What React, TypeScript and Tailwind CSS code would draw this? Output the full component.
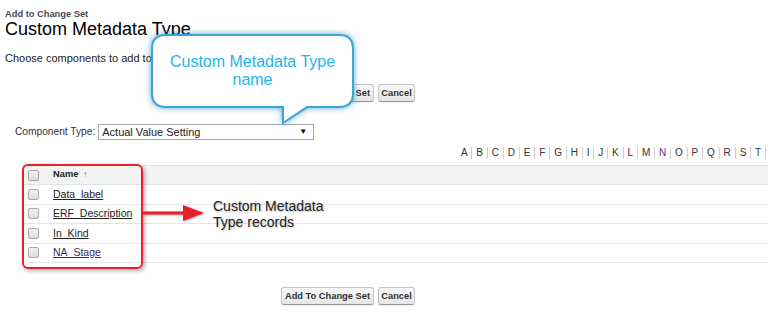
const letters = 'ABCDEFGHIJKLMNOPQRST'.split('')

const records = ['Data_label', 'ERF_Description', 'In_Kind', 'NA_Stage']

function Btn({ label, w }: { label: string; w: string }) {
    return (
        <button
            className={`${w} h-[18px] rounded-[3px] border border-[#c4c4c4] border-b-[#9a9a9a] bg-gradient-to-b from-[#f8f8f8] to-[#e6e6e6] text-[9.3px] font-bold leading-[16px] text-[#333] shadow-[0_1px_1px_rgba(0,0,0,0.08)]`}
        >
            {label}
        </button>
    )
}

function Check() {
    return <span className="block h-[11px] w-[11px] rounded-[2px] border border-[#a8a8a8] bg-gradient-to-b from-[#f2f2f2] to-[#dcdcdc]" />
}

export default function App() {
    return (
        <div className="relative h-[320px] w-[768px] overflow-hidden bg-white font-['Liberation_Sans',Arial,sans-serif] text-[#222]">
            {/* Page header */}
            <div className="px-[5px] pt-[8px]">
                <div className="text-[9.3px] font-bold leading-[12px] text-[#4a4a56]">Add to Change Set</div>
                <h1 className="text-[18px] leading-[19px] text-black">Custom Metadata Type</h1>
                <p className="mt-[12px] text-[11px] leading-[14px] text-[#222]">Choose components to add to this change set.</p>
            </div>

            {/* Top buttons */}
            <div className="mt-[19px] flex gap-[4px] pl-[281px]">
                <Btn label="Add To Change Set" w="w-[93px]" />
                <Btn label="Cancel" w="w-[37px]" />
            </div>

            {/* Component type */}
            <div className="mt-[22px] flex items-center pl-[15px]">
                <span className="text-[10.2px] leading-[16px] text-[#333]">Component Type:</span>
                <div className="ml-[3px] flex h-[16px] w-[216px] items-center justify-between border border-[#a9a9a9] bg-white pl-[3px] pr-[6px]">
                    <span className="text-[11px] leading-[14px] text-[#222]">Actual Value Setting</span>
                    <span className="text-[8px] leading-[10px] text-black">▼</span>
                </div>
            </div>

            {/* Alphabet filter */}
            <div className="mt-[7px] flex whitespace-nowrap pl-[457px] text-[10px] leading-[12px] text-[#333]">
                {letters.map((l, i) => (
                    <span
                        key={l}
                        className={`px-[3.9px] border-r border-[#cfcfcf] ${i > 0 ? '' : ''} ${l === 'N' ? 'text-[#5b2a86]' : ''}`}
                    >
                        {l}
                    </span>
                ))}
            </div>

            {/* Table */}
            <div className="ml-[22px] mt-[6px]">
                <div className="flex h-[20px] items-center border-y border-[#e0e3e5] bg-[#f2f3f3]">
                    <div className="w-[31px] pl-[6px]"><Check /></div>
                    <span className="text-[9.3px] font-bold text-[#222]">Name</span>
                    <span className="ml-[5px] text-[8px] text-[#666]">↑</span>
                </div>
                {records.map((r) => (
                    <div key={r} className="flex h-[19.5px] items-center border-b border-[#e6e6e6]">
                        <div className="w-[31px] pl-[6px]"><Check /></div>
                        <a className={`text-[10.5px] leading-[13px] underline ${r === 'NA_Stage' ? 'text-[#3b2a6b]' : 'text-[#222]'}`}>{r}</a>
                    </div>
                ))}
            </div>

            {/* Bottom buttons */}
            <div className="mt-[24px] flex gap-[4px] pl-[281px]">
                <Btn label="Add To Change Set" w="w-[93px]" />
                <Btn label="Cancel" w="w-[37px]" />
            </div>

            {/* Callout bubble */}
            <div className="absolute left-[150px] top-[33px] h-[94px] w-[206px]">
                <svg className="absolute inset-0 drop-shadow-[0_0_3px_rgba(20,130,200,0.7)]" width="206" height="94" viewBox="0 0 206 94">
                    <path
                        d="M16 2 H189 Q203 2 203 16 V60 Q203 74 189 74 H157 L133 90 L133 74 H16 Q2 74 2 60 V16 Q2 2 16 2 Z"
                        fill="#fff"
                        stroke="#3aa6d6"
                        strokeWidth="2"
                    />
                </svg>
                <div className="relative w-[205px] pt-[20px] text-center text-[16px] leading-[18px] text-[#1fb3ee]">
                    Custom Metadata Type
                    <br />
                    name
                </div>
            </div>

            {/* Red highlight box */}
            <div className="absolute left-[22px] top-[164px] h-[105px] w-[121px] rounded-[6px] border-2 border-[#e8202a] shadow-[2px_2px_4px_rgba(0,0,0,0.3)]" />

            {/* Red arrow */}
            <svg className="absolute left-[143px] top-[203px] drop-shadow-[1px_1px_1px_rgba(0,0,0,0.3)]" width="64" height="20" viewBox="0 0 64 20">
                <rect x="0" y="8.5" width="42" height="3" fill="#e8202a" />
                <polygon points="40,2 61,10 40,18" fill="#e8202a" />
            </svg>

            {/* Annotation */}
            <div className="absolute left-[213px] top-[198px] text-[14px] leading-[16px] text-[#222] [text-shadow:1px_1px_2px_rgba(0,0,0,0.25)]">
                Custom Metadata
                <br />
                Type records
            </div>
        </div>
    )
}
